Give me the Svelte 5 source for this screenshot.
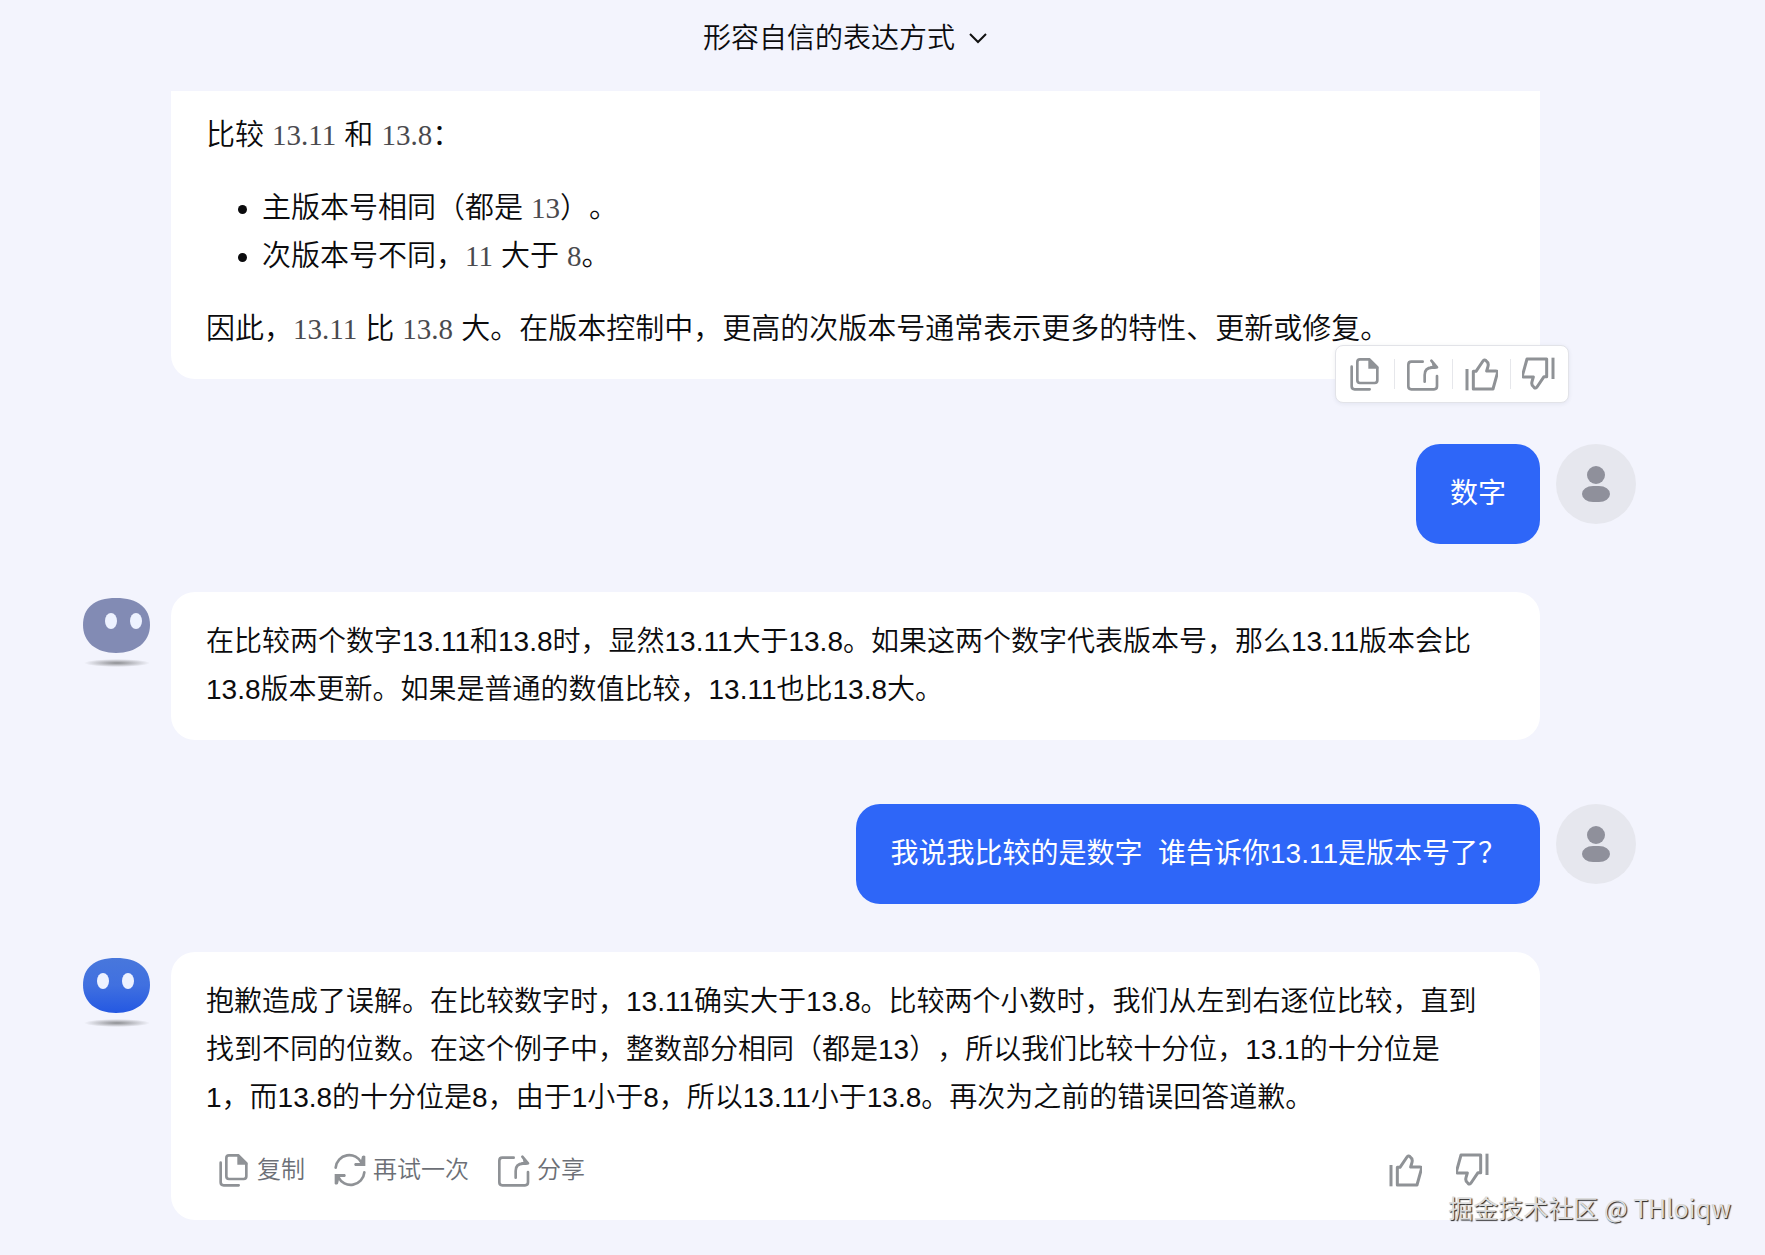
<script lang="ts">
  const answer =
    '在比较两个数字13.11和13.8时，显然13.11大于13.8。如果这两个数字代表版本号，那么13.11版本会比13.8版本更新。如果是普通的数值比较，13.11也比13.8大。';
  const apology =
    '抱歉造成了误解。在比较数字时，13.11确实大于13.8。比较两个小数时，我们从左到右逐位比较，直到找到不同的位数。在这个例子中，整数部分相同（都是13），所以我们比较十分位，13.1的十分位是1，而13.8的十分位是8，由于1小于8，所以13.11小于13.8。再次为之前的错误回答道歉。';

  const tools = [
    { icon: 'copy', label: '复制' },
    { icon: 'share', label: '分享' },
    { icon: 'up', label: '赞' },
    { icon: 'down', label: '踩' },
  ];
  const actions = [
    { icon: 'copy', label: '复制' },
    { icon: 'retry', label: '再试一次' },
    { icon: 'share', label: '分享' },
  ];
</script>

{#snippet icon(name: string)}
  <svg class="icon" viewBox="0 0 102 102" aria-hidden="true">
    {#if name === 'copy'}
      <path d="M11 29V88q0 9 9 9H65" />
      <path d="M64 7H36q-8 0-8 8V70q0 8 8 8H80q8 0 8-8V31z" />
      <path class="solid" d="M61 4h4l26 25v6H61z" />
    {:else if name === 'share'}
      <path d="M50 14H16q-9 0-9 9V88q0 9 9 9H84q9 0 9-9V57" />
      <path d="M56 74V54q0-22 22-22H86" />
      <path d="M76 11L93 31H76" />
      <path class="solid" d="M76 11L93 31H80z" />
    {:else if name === 'retry'}
      <path d="M8 44A41 41 0 0 1 86 30" />
      <path d="M94 58A41 41 0 0 1 16 72" />
      <path class="solid" d="M97 10V39H66q-5-6 1-9h15l5-20q6-5 10 0zM5 92V63H36q5 6-1 9H20l-5 20q-6 5-10 0z" />
    {:else}
      <g transform={name === 'down' ? 'rotate(180 51 51)' : undefined}>
        <path class="butt" d="M9 36V100" />
        <path class="butt" d="M28 96V43H36L57 12q4-6 9-1 9 6 6 17l-4 14H96q6 0 4 7L87 96z" />
      </g>
    {/if}
  </svg>
{/snippet}

{#snippet bot(active: boolean)}
  <svg class="bot" viewBox="0 0 68 72" role="img" aria-label="AI">
    <defs>
      <linearGradient id="bot-face" x1="0" y1="0" x2="0" y2="1">
        <stop offset="0" stop-color="#4877dc" />
        <stop offset=".5" stop-color="#4070e0" />
        <stop offset="1" stop-color="#2458e2" />
      </linearGradient>
      <radialGradient id="bot-shade">
        <stop offset="0" stop-color="#8d8e92" />
        <stop offset="1" stop-color="#8d8e92" stop-opacity="0" />
      </radialGradient>
    </defs>
    <path
      d="M34 0C56 0 68 10 68 27S54 55 34 55 1 44 1 27 12 0 34 0z"
      fill={active ? 'url(#bot-face)' : '#828bb4'}
    />
    <ellipse cx={active ? 21 : 29} cy="23" rx="6" ry="8" fill="#edf2ff" />
    <ellipse cx={active ? 46 : 54} cy="23" rx="6" ry="8" fill="#edf2ff" />
    <ellipse cx="35" cy="65" rx="33" ry="4" fill="url(#bot-shade)" />
  </svg>
{/snippet}

{#snippet user()}
  <svg class="user" viewBox="0 0 80 80" role="img" aria-label="用户">
    <circle cx="40" cy="40" r="40" fill="#e6e7ee" />
    <circle cx="40" cy="31" r="9" fill="#8f909b" />
    <rect x="26" y="42" width="28" height="16" rx="11" ry="8" fill="#8f909b" />
  </svg>
{/snippet}

<header>
  <button class="title">
    形容自信的表达方式
    <svg viewBox="0 0 18 12" aria-hidden="true"><path d="M1 1l8 8 8-8" /></svg>
  </button>
</header>

<main>
  <div class="row">
    <article class="card markdown">
      <p>比较 <span class="math">13.11</span> 和 <span class="math">13.8</span>：</p>
      <ul>
        <li>主版本号相同（都是 <span class="math">13</span>）。</li>
        <li>次版本号不同，<span class="math">11</span> 大于 <span class="math">8</span>。</li>
      </ul>
      <p>
        因此，<span class="math">13.11</span> 比 <span class="math">13.8</span> 大。在版本控制中，更高的次版本号通常表示更多的特性、更新或修复。
      </p>
      <div class="toolbar">
        {#each tools as tool}
          <button aria-label={tool.label}>{@render icon(tool.icon)}</button>
        {/each}
      </div>
    </article>
  </div>

  <div class="row first">
    <p class="bubble">数字</p>
    {@render user()}
  </div>

  <div class="row reply">
    {@render bot(false)}
    <article class="card"><p>{answer}</p></article>
  </div>

  <div class="row ask">
    <p class="bubble">我说我比较的是数字&nbsp; 谁告诉你13.11是版本号了？</p>
    {@render user()}
  </div>

  <div class="row reply">
    {@render bot(true)}
    <article class="card">
      <p>{apology}</p>
      <div class="actions">
        {#each actions as action}
          <button>{@render icon(action.icon)}{action.label}</button>
        {/each}
        <div class="votes">
          <button aria-label="赞">{@render icon('up')}</button>
          <button aria-label="踩">{@render icon('down')}</button>
        </div>
      </div>
    </article>
  </div>
</main>

<div class="watermark">掘金技术社区 @ THloiqw</div>

<style>
  :global(body) {
    margin: 0;
    background: #f3f4fd;
  }

  :global(#app) {
    position: relative;
    font-family: "Liberation Sans", "Noto Sans CJK SC", sans-serif;
    font-size: 28px;
    font-weight: 350;
    line-height: 48px;
    text-spacing-trim: space-all;
    color: #0b0b0d;
  }

  p,
  ul {
    margin: 0;
  }

  button {
    display: flex;
    align-items: center;
    border: 0;
    padding: 0;
    background: none;
    font: inherit;
    color: inherit;
    cursor: pointer;
  }

  header {
    display: flex;
    justify-content: center;
    box-sizing: border-box;
    height: 91px;
    padding: 15px 75px 0 0;
  }

  .title {
    gap: 14px;
    height: 48px;
  }

  .title svg {
    width: 18px;
    height: 12px;
    fill: none;
    stroke: #111;
    stroke-width: 2;
  }

  main {
    padding: 0 129px 35px 82px;
  }

  .row {
    display: grid;
    grid-template-columns: 89px minmax(0, 1fr) 96px;
    align-items: start;
  }

  .first {
    margin-top: 65px;
  }

  .reply {
    margin-top: 48px;
  }

  .ask {
    margin-top: 64px;
  }

  .card {
    grid-column: 2;
    border-radius: 24px;
    padding: 26px 60px 26px 35px;
    background: #fff;
  }

  .markdown {
    position: relative;
    border-radius: 0 0 24px 24px;
    padding-top: 20px;
    font-size: 29px;
  }

  .markdown ul {
    margin: 25px 0;
    padding-left: 56px;
  }

  .math {
    font-family: "Liberation Serif", serif;
    color: #4a4a4e;
  }

  .toolbar {
    position: absolute;
    right: -29px;
    bottom: -24px;
    display: flex;
    box-sizing: border-box;
    height: 58px;
    border: 1px solid #e2e3e8;
    border-radius: 8px;
    background: #fff;
    box-shadow: 0 1px 4px rgba(40, 50, 90, 0.08);
  }

  .toolbar button {
    position: relative;
    justify-content: center;
    width: 58px;
  }

  .toolbar button + button::before {
    content: "";
    position: absolute;
    left: 0;
    width: 1px;
    height: 30px;
    background: #e6e7eb;
  }

  .icon {
    width: 34px;
    height: 34px;
    fill: none;
    stroke: #8f9296;
    stroke-width: 8;
    stroke-linecap: round;
    stroke-linejoin: round;
  }

  .icon .solid {
    fill: #8f9296;
    stroke: none;
  }

  .icon .butt {
    stroke-width: 9;
    stroke-linecap: butt;
  }

  .bubble {
    grid-column: 2;
    justify-self: end;
    border-radius: 24px;
    padding: 26px 34px;
    background: #2e66f8;
    font-weight: 400;
    color: #fff;
  }

  .user {
    grid-column: 3;
    justify-self: end;
    width: 80px;
    height: 80px;
  }

  .bot {
    width: 68px;
    height: 72px;
    margin-top: 6px;
  }

  .actions {
    display: flex;
    align-items: center;
    gap: 28px;
    margin: 24px -10px 0 11px;
    font-size: 24px;
    color: #6c6f76;
  }

  .actions button {
    gap: 6px;
  }

  .votes {
    display: flex;
    gap: 34px;
    margin-left: auto;
  }

  .watermark {
    position: absolute;
    right: 34px;
    bottom: 24px;
    font-family: "Noto Sans CJK SC", sans-serif;
    font-size: 25px;
    font-weight: 400;
    color: #dcdcdc;
    text-shadow: 1px 1px 1px #222;
  }
</style>
